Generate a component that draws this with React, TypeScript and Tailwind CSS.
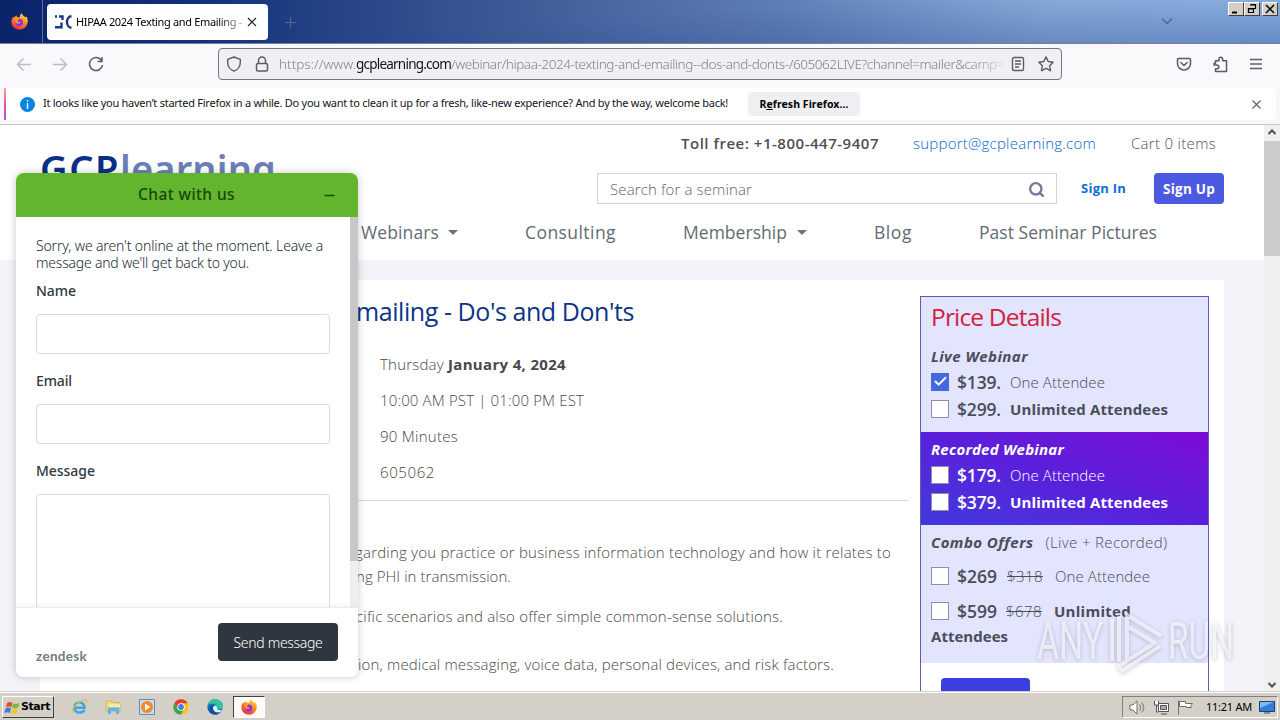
import { useLayoutEffect, useRef, useState } from 'react';
import type { ReactNode } from 'react';
import { Search, Check, Minus } from 'lucide-react';

// Inline text stretched to an exact width by spreading the letters.
function Fit({ w, className = '', children }: { w: number; className?: string; children: ReactNode }) {
  const ref = useRef<HTMLSpanElement>(null);
  const [spacing, setSpacing] = useState(0);

  useLayoutEffect(() => {
    const el = ref.current;
    if (!el) return;
    const n = (el.textContent ?? '').length;
    setSpacing((w - el.getBoundingClientRect().width) / n);
  }, [w]);

  return (
    <span ref={ref} className={`inline-block flex-none whitespace-pre ${className}`} style={{ letterSpacing: spacing }}>
      {children}
    </span>
  );
}

function FirefoxLogo({ size }: { size: number }) {
  return (
    <svg width={size} height={size} viewBox="0 0 16 16">
      <defs>
        <linearGradient id="ff-flame" x1="0.8" y1="0" x2="0.3" y2="1">
          <stop offset="0" stopColor="#ffe44a" />
          <stop offset="0.45" stopColor="#ff8a1f" />
          <stop offset="1" stopColor="#f5264f" />
        </linearGradient>
      </defs>
      <path d="M10 .3c.4 1.600 1.800 2.100 3 3.500 1.200-.1 1.400-.3 1.600-.6C15.600 5 16 6.800 15.700 9 15 13 11.900 15.700 8 15.700S.6 12.700.4 8.700C.3 6.500 1 4.500 2.200 3.200l.5 1.300L5 2l.6 1.800 2.500.4C8.200 2.600 9 1.100 10 .3z" fill="url(#ff-flame)" />
      <circle cx="7.800" cy="9" r="3.500" fill="#8a35d9" />
      <path d="M3.500 5.300c1.500-.9 3.400-.5 4.300.8-1.300.3-2 .9-1.600 1.700.5.8 2 .3 2.600 1.100-1 1.700-3.600 1.200-4.600-.5-.5-.9-.8-2-.7-3.100z" fill="#ff9722" />
    </svg>
  );
}

function WinButton({ children }: { children: ReactNode }) {
  return (
    <div className="flex h-[14px] w-4 items-center justify-center border border-t-white border-l-white border-r-[#404040] border-b-[#404040] bg-[#d4d0c8]">
      <svg width="12" height="12" viewBox="0 0 12 12" fill="none" stroke="#000" strokeWidth="1.5">
        {children}
      </svg>
    </div>
  );
}

function TabStrip() {
  return (
    <div className="flex h-[44px] border-b border-[#77809a] bg-[linear-gradient(176deg,transparent_45%,rgba(20,50,130,0.4)),linear-gradient(90deg,#0a246a_0%,#123078_15%,#3a5795_38%,#6080b8_62%,#8fb2de_82%,#9cc5f0_100%)]">
      <div className="flex w-[43px] items-center justify-center border-r border-[#5a6d9f] pr-1">
        <FirefoxLogo size={17} />
      </div>
      <div className="mt-1 ml-1 flex h-9 w-[221px] items-center rounded bg-white pl-2 font-['Noto_Sans',sans-serif] text-[11px] text-black">
        <svg width="17" height="14" viewBox="0 0 17 14" fill="none" stroke="#1b3a7c" strokeWidth="2.400">
          <path d="M0 1.500h2M4 1.500h3.500V5M0 12.300h6.500V7.500" />
          <path d="M16.500 1.300c-6 0-6 11.400 0 11.400" />
        </svg>
        <div className="mt-px ml-1 w-[166px] overflow-hidden [mask-image:linear-gradient(90deg,#000_85%,rgba(0,0,0,0.3))]">
          <Fit w={166}>HIPAA 2024 Texting and Emailing -</Fit>
        </div>
        <svg className="ml-[5px]" width="10" height="10" viewBox="0 0 10 10" stroke="#222" strokeWidth="1.200">
          <path d="M1 1l8 8M9 1L1 9" />
        </svg>
      </div>
      <svg className="mt-4 ml-4" width="13" height="13" viewBox="0 0 13 13" stroke="#52658c" strokeWidth="1.200">
        <path d="M6.500 1v11M1 6.500h11" />
      </svg>
      <svg className="mt-[17px] ml-auto" width="12" height="9" viewBox="0 0 12 9" fill="none" stroke="#4a6896" strokeWidth="1.500">
        <path d="M1 1.500l5 5 5-5" />
      </svg>
      <div className="mt-[2px] mr-[2px] ml-[55px] flex h-[14px]">
        <WinButton><path d="M2 9.500h5" strokeWidth="2" /></WinButton>
        <WinButton>
          <path d="M4.500 1.500h5v4h-2M4 2h6M2.500 5.500h5v4h-5zM2 6h6" strokeWidth="1.200" />
        </WinButton>
        <div className="w-[2px]" />
        <WinButton><path d="M2 2l8 8M10 2l-8 8" /></WinButton>
      </div>
    </div>
  );
}

function Toolbar() {
  return (
    <div className="flex h-11 items-center bg-[#f9f9fb] pb-1">
      <svg className="ml-4" width="80" height="18" viewBox="0 0 80 18" fill="none" stroke="#bcbcc4" strokeWidth="1.500">
        <path d="M15 9.500H1.500M7.500 3.500l-6 6 6 6" />
        <path d="M37 9.500h13.500M44.500 3.500l6 6-6 6" />
      </svg>
      <svg className="-ml-2" width="16" height="16" viewBox="0 0 16 16" fill="none" stroke="#5b5b66" strokeWidth="1.500">
        <path d="M13.400 4.300A6.500 6.500 0 1 0 14.500 9M14 1v4.500H9.500" />
      </svg>
      <div className="ml-[114px] flex h-8 w-[844px] items-center rounded border border-[#75757e] bg-[#f0f0f4] font-['Noto_Sans',sans-serif] text-[13.500px] font-light text-[#80808a]">
        <svg className="ml-[7px]" width="16" height="16" viewBox="0 0 16 16" fill="none" stroke="#5b5b66" strokeWidth="1.400">
          <path d="M8 1l6.300 2.300v3.200C14.300 10.500 11.500 14 8 15.200 4.500 14 1.700 10.500 1.700 6.500V3.300z" strokeLinejoin="round" />
        </svg>
        <svg className="ml-3" width="16" height="16" viewBox="0 0 16 16" fill="none" stroke="#5b5b66" strokeWidth="1.500">
          <rect x="2.500" y="7.500" width="11" height="7.500" rx="1.500" />
          <path d="M4.500 7V4.500a3.500 3.500 0 0 1 7 0V7" />
        </svg>
        <div className="ml-[9px] flex w-[725px] [mask-image:linear-gradient(90deg,#000_95%,rgba(0,0,0,0.25))]">
          <Fit w={77}>https://www.</Fit>
          <Fit w={95} className="font-normal text-[#15141a]">gcplearning.com</Fit>
          <Fit w={553}>/webinar/hipaa-2024-texting-and-emailing--dos-and-donts-/605062LIVE?channel=mailer&amp;camp=</Fit>
        </div>
        <svg className="ml-[6px]" width="16" height="16" viewBox="0 0 16 16" fill="none" stroke="#5b5b66" strokeWidth="1.400">
          <rect x="2.500" y="1.500" width="11" height="13" rx="1.500" />
          <path d="M5 5h6M5 8h6M5 11h4" />
        </svg>
        <svg className="ml-3" width="16" height="16" viewBox="0 0 16 16" fill="none" stroke="#5b5b66" strokeWidth="1.400" strokeLinejoin="round">
          <path d="M8 .9l2.200 4.600 5 .7-3.600 3.500.9 5L8 12.300l-4.500 2.400.9-5L.8 6.200l5-.7z" />
        </svg>
      </div>
      <svg className="ml-[114px]" width="16" height="16" viewBox="0 0 16 16" fill="none" stroke="#5b5b66" strokeWidth="1.500" strokeLinejoin="round">
        <path d="M2.500 2.500h11a1 1 0 0 1 1 1V7.500a6.500 6.500 0 0 1-13 0v-4a1 1 0 0 1 1-1z" />
        <path d="M4.800 6.500L8 9.500l3.200-3" strokeLinecap="round" />
      </svg>
      <svg className="ml-[21px]" width="16" height="17" viewBox="0 0 16 17" fill="none" stroke="#5b5b66" strokeWidth="1.500" strokeLinejoin="round">
        <path d="M2.500 7.200V4.800H6V3a1.800 1.800 0 0 1 3.600 0v1.800H13.500v10.700H2.500v-2.800H4a1.900 1.900 0 0 0 0-3.800H1V7.200z" />
      </svg>
      <svg className="ml-[21px]" width="12" height="12" viewBox="0 0 12 12" stroke="#5b5b66" strokeWidth="1.400">
        <path d="M0 1.500h12M0 6h12M0 10.500h12" />
      </svg>
    </div>
  );
}

function Notification() {
  return (
    <div className="flex h-[37px] border-b border-[#c4c4c8] bg-[#f7f7f8] pl-1">
      <div className="flex h-8 w-[1272px] items-center rounded-sm bg-white font-['Noto_Sans',sans-serif] text-[11px] text-[#15141a]">
        <div className="h-8 w-[2px] bg-linear-to-b from-[#f7a37c] via-[#ec4fa0] to-[#9b5bd6]" />
        <div className="ml-[14px] flex size-[15px] items-center justify-center rounded-full bg-[#0a84e6]">
          <svg width="3" height="9" viewBox="0 0 3 9" fill="#fff">
            <path d="M.8 0h1.400v1.500H.8zM.8 3h1.400v6H.8z" />
          </svg>
        </div>
        <Fit w={685} className="-mt-px ml-2">It looks like you haven’t started Firefox in a while. Do you want to clean it up for a fresh, like-new experience? And by the way, welcome back!</Fit>
        <div className="ml-5 flex h-6 w-28 items-center justify-center rounded bg-[#efeff1] pt-px text-[10.500px] font-bold text-black">
          <Fit w={89}>R<u>e</u>fresh Firefox...</Fit>
        </div>
        <svg className="mr-[15px] ml-auto" width="9" height="9" viewBox="0 0 9 9" stroke="#5b5b66" strokeWidth="1.100">
          <path d="M.5 .5l8 8M8.500 .5l-8 8" />
        </svg>
      </div>
    </div>
  );
}

function Caret({ className }: { className: string }) {
  return (
    <svg className={className} width="10" height="5" viewBox="0 0 10 5" fill="#6c757d">
      <path d="M0 0h10L5 5z" />
    </svg>
  );
}

function SiteHeader() {
  return (
    <div className="flex h-[135px] flex-col bg-white pt-2 text-[#4f4f4f]">
      <div className="flex h-5 items-center pl-[681px] text-[15px] leading-5">
        <Fit w={198} className="font-semibold">Toll free: +1-800-447-9407</Fit>
        <Fit w={183} className="ml-[34px] font-light text-[#0a66cc]">support@gcplearning.com</Fit>
        <Fit w={85} className="ml-[35px] font-light">Cart 0 items</Fit>
      </div>
      <div className="mt-5 flex h-[31px] items-center">
        <div className="h-[31px] w-[557px] pl-10">
          <div className="-mt-[29px] flex font-['Noto_Sans',sans-serif] text-[38px] leading-[48px]">
            <Fit w={80} className="font-semibold text-[#0b2f82]">GCP</Fit>
            <Fit w={156} className="font-semibold text-[#6c7fb8]">learning</Fit>
          </div>
        </div>
        <div className="ml-10 flex h-[31px] w-[460px] items-center justify-between border border-[#ced4da] pt-px pr-[11px] pl-3 text-[15px] font-light text-[#5c656d]">
          <Fit w={142}>Search for a seminar</Fit>
          <Search size={17} strokeWidth={3.4} color="#757b98" />
        </div>
        <Fit w={45} className="mt-px ml-6 text-[13px] font-bold text-[#0a6fd8]">Sign In</Fit>
        <div className="ml-7 flex h-[31px] w-[70px] items-center justify-center rounded bg-[#4b5ae0] pt-px text-[13.500px] font-bold text-white">
          <Fit w={52}>Sign Up</Fit>
        </div>
      </div>
      <div className="mt-[15px] flex h-[26px] items-center pl-[361px] text-[17.500px] font-medium text-[#626b73]">
        <Fit w={78}>Webinars</Fit>
        <Caret className="ml-[9px]" />
        <Fit w={91} className="ml-[67px]">Consulting</Fit>
        <Fit w={104} className="ml-[67px]">Membership</Fit>
        <Caret className="ml-[10px]" />
        <Fit w={38} className="ml-[67px]">Blog</Fit>
        <Fit w={178} className="ml-[67px]">Past Seminar Pictures</Fit>
      </div>
    </div>
  );
}

function Box({ checked = false }: { checked?: boolean }) {
  return checked ? (
    <span className="flex size-[18px] items-center justify-center bg-[#4468e0] text-white">
      <Check size={15} strokeWidth={3} />
    </span>
  ) : (
    <span className="size-[18px] border border-[#8d8fa8] bg-white" />
  );
}

function Offer({ price, bold = false, checked = false }: { price: string; bold?: boolean; checked?: boolean }) {
  return (
    <div className="flex h-[27px] items-center">
      <Box checked={checked} />
      <Fit w={44} className="ml-2 text-[17.500px] font-semibold">{price}</Fit>
      <Fit w={bold ? 158 : 95} className={bold ? 'ml-[9px] font-bold' : 'ml-[9px] font-light'}>
        {bold ? 'Unlimited Attendees' : 'One Attendee'}
      </Fit>
    </div>
  );
}

function PriceDetails() {
  return (
    <div className="mt-4 ml-[11px] w-[289px] border border-[#5c5cb8] text-[15px] leading-6 text-[#4a4d5a]">
      <div className="h-[135px] bg-[#e3e4fd] pt-[3px] pl-[10px]">
        <div className="h-[34px] text-[24.500px] leading-[34px] text-[#d3223f]"><Fit w={130}>Price Details</Fit></div>
        <div className="mt-[10px] h-6 font-bold italic"><Fit w={97}>Live Webinar</Fit></div>
        <Offer price="$139." checked />
        <Offer price="$299." bold />
      </div>
      <div className="h-[93px] bg-linear-to-tr from-[#4038dc] via-[#5a1fdb] to-[#7d06d4] pt-[5px] pl-[10px] text-white">
        <div className="h-6 font-bold italic"><Fit w={133}>Recorded Webinar</Fit></div>
        <Offer price="$179." />
        <Offer price="$379." bold />
      </div>
      <div className="h-[138px] bg-[#e3e4fd] pt-[5px] pl-[10px]">
        <div className="flex h-6">
          <Fit w={102} className="font-bold italic">Combo Offers</Fit>
          <Fit w={122} className="ml-3 font-light">(Live + Recorded)</Fit>
        </div>
        <div className="mt-[9px] flex h-[26px] items-center">
          <Box />
          <Fit w={40} className="ml-2 text-[17.500px] font-semibold">$269</Fit>
          <Fit w={36} className="ml-[10px] font-light line-through">$318</Fit>
          <Fit w={95} className="ml-3 font-light">One Attendee</Fit>
        </div>
        <div className="mt-[9px] flex h-[26px] items-center">
          <Box />
          <Fit w={40} className="ml-2 text-[17.500px] font-semibold">$599</Fit>
          <Fit w={36} className="ml-[9px] font-light line-through">$678</Fit>
          <Fit w={77} className="ml-3 font-bold">Unlimited</Fit>
        </div>
        <div className="h-6 font-bold"><Fit w={77}>Attendees</Fit></div>
      </div>
      <div className="mt-[15px] ml-5 h-9 w-[89px] rounded bg-[#3c3fe0]" />
    </div>
  );
}

// Copy that runs out from below the chat window, ending at a set right edge.
function Copy({ lead, text, w, className }: { lead: string; text: string; w: number; className: string }) {
  return (
    <div className={`flex h-6 justify-end whitespace-pre ${className}`}>
      <span>{lead}</span>
      <Fit w={w}>{text}</Fit>
    </div>
  );
}

function Seminar() {
  return (
    <div className="h-[412px] w-[869px] overflow-hidden text-[15px] leading-6 font-light text-[#484848]">
      <div className="mt-[13px] flex h-9 w-[594px] justify-end text-[25px] leading-9 font-normal whitespace-pre text-[#0b3487]">
        <Fit w={278}>mailing - Do's and Don'ts</Fit>
      </div>
      <div className="mt-[17px] flex flex-col pl-[340px]">
        <div className="flex h-9 items-center">
          <Fit w={68}>Thursday </Fit>
          <Fit w={118} className="font-bold">January 4, 2024</Fit>
        </div>
        <div className="flex h-9 items-center"><Fit w={204}>10:00 AM PST | 01:00 PM EST</Fit></div>
        <div className="flex h-9 items-center"><Fit w={78}>90 Minutes</Fit></div>
        <div className="flex h-9 items-center"><Fit w={55}>605062</Fit></div>
      </div>
      <div className="mt-[10px] h-px bg-[#d9d9dc]" />
      <Copy lead="re" text="garding you practice or business information technology and how it relates to" w={536} className="mt-[39px] w-[851px]" />
      <Copy lead="usi" text="ng PHI in transmission." w={155} className="w-[471px]" />
      <Copy lead="spe" text="cific scenarios and also offer simple common-sense solutions." w={427} className="mt-4 w-[743px]" />
      <Copy lead="encrypt" text="ion, medical messaging, voice data, personal devices, and risk factors." w={476} className="mt-6 w-[794px]" />
    </div>
  );
}

function PageScrollbar() {
  return (
    <div className="flex h-[567px] w-4 flex-col items-center bg-[#f0f0f0]">
      <svg className="mt-[4px]" width="8" height="6" viewBox="0 0 8 6" fill="none" stroke="#505050" strokeWidth="2">
        <path d="M.5 5L4 1.500 7.500 5" />
      </svg>
      <div className="mt-[6px] h-[115px] w-4 bg-[#cbcbcb]" />
      <svg className="mt-auto mb-[4px]" width="8" height="6" viewBox="0 0 8 6" fill="none" stroke="#505050" strokeWidth="2">
        <path d="M.5 1L4 4.500 7.500 1" />
      </svg>
    </div>
  );
}

function ChatWidget() {
  return (
    <div className="absolute top-[173px] left-4 flex h-[504px] w-[342px] flex-col overflow-hidden rounded-lg bg-white font-['Noto_Sans',sans-serif] text-[14px] text-[#2f3941] shadow-[0_0_8px_rgba(0,0,0,0.22)]">
      <div className="flex h-11 flex-none items-center bg-[#62b52d] pl-[122px] text-[#17470a]">
        <Fit w={97} className="text-[15.500px] font-medium">Chat with us</Fit>
        <Minus className="ml-[87px]" size={15} strokeWidth={2.5} />
      </div>
      <div className="flex min-h-0 flex-1">
        <div className="flex w-[334px] flex-col overflow-hidden px-5">
          <div className="mt-5 h-[35px] flex-none leading-[17px] font-light text-[#222b33]">
            <Fit w={287}>Sorry, we aren't online at the moment. Leave a</Fit>
            <Fit w={213}>message and we'll get back to you.</Fit>
          </div>
          <div className="mt-[9px] h-5 flex-none leading-5 font-medium"><Fit w={40}>Name</Fit></div>
          <div className="mt-[13px] h-10 flex-none rounded border border-[#d8dcde]" />
          <div className="mt-[17px] h-5 flex-none leading-5 font-medium"><Fit w={36}>Email</Fit></div>
          <div className="mt-[13px] h-10 flex-none rounded border border-[#d8dcde]" />
          <div className="mt-[17px] h-5 flex-none leading-5 font-medium"><Fit w={59}>Message</Fit></div>
          <div className="mt-[13px] h-32 flex-none rounded border border-[#d8dcde]" />
        </div>
        <div className="w-2 bg-[#efefef]"><div className="h-[344px] bg-[#c7c7c7]" /></div>
      </div>
      <div className="flex h-[70px] flex-none border-t border-[#ececec] bg-white shadow-[0_-2px_6px_rgba(0,0,0,0.05)]">
        <Fit w={51} className="mt-[38px] ml-5 font-['Lato',sans-serif] text-[13.500px] leading-5 font-bold text-[#737b80]">zendesk</Fit>
        <div className="mt-[15px] mr-5 ml-auto flex h-[38px] w-[120px] items-center justify-center rounded bg-[#2f3640] text-[14px] font-light text-white">
          <Fit w={89}>Send message</Fit>
        </div>
      </div>
    </div>
  );
}

function Watermark() {
  return (
    <svg className="absolute top-[604px] left-[1034px] [filter:drop-shadow(0_1px_2px_rgba(70,70,100,0.45))]" width="204" height="70" viewBox="0 0 204 70" fill="#fff" fillOpacity="0.65">
      <g fontFamily="Roboto, sans-serif" fontSize="52" fontWeight="400">
        <text x="3" y="55" textLength="66" lengthAdjust="spacingAndGlyphs">ANY</text>
        <text x="134" y="55" textLength="66" lengthAdjust="spacingAndGlyphs">RUN</text>
      </g>
      <g fill="none" stroke="#fff" strokeOpacity="0.65" strokeWidth="4" strokeLinejoin="round">
        <path d="M78 15v42M85 12v46" />
        <path d="M93 56V11l34 21M93 22l28 17-36 23 3 5 38-25" />
      </g>
    </svg>
  );
}

function Taskbar() {
  return (
    <div className="flex h-7 items-center border-t border-white bg-[#d4d0c8] pt-px pl-[2px] font-['DejaVu_Sans',sans-serif] text-[11px] text-black shadow-[0_-1px_0_#d4d0c8]">
      <div className="flex h-[22px] w-[52px] items-center border border-t-white border-l-white border-r-[#404040] border-b-[#404040] pt-px pl-[1px] font-bold">
        <svg width="17" height="16" viewBox="0 0 17 16">
          <path d="M3 3c2-1.500 4-1.200 5.500-.3L7.300 7.300C5.500 6.300 3.800 6.300 1.800 7.500z" fill="#e5532a" />
          <path d="M9.300 3.200c2 1 4 1 6.200-.4l-1.300 4.800c-2 1.200-4 1.100-6 .2z" fill="#7db63c" />
          <path d="M1.500 8.500c2-1.300 4-1.200 5.500-.3l-1.200 4.700C4 11.800 2.200 12 .3 13z" fill="#3f7fd0" />
          <path d="M8 8.700c2 1 4 1 6-.2l-1.300 4.700c-2 1.200-4 1.100-6 .2z" fill="#f5c431" />
        </svg>
        <Fit w={29} className="text-[11px]">Start</Fit>
      </div>
      <svg className="ml-[17px]" width="17" height="16" viewBox="0 0 17 16" fill="none">
        <path d="M13.500 11c-2.500 4-10 3.300-10-2.500 0-6.500 10-7 10 .3H4.500" stroke="#3da5e3" strokeWidth="2.500" />
        <path d="M1.500 13.500C-.5 10 8 1.500 14 1.200c2-.1 2 1.500 1 3" stroke="#e9bd3a" strokeWidth="1.300" />
      </svg>
      <svg className="ml-[17px]" width="17" height="16" viewBox="0 0 17 16">
        <path d="M1 2h6l1 1.500h7V12H1z" fill="#f2d878" stroke="#c9a849" strokeWidth=".7" />
        <path d="M4 5h11v3H4z" fill="#f8eab0" />
        <path d="M3 8.500h11v6.500h-3v-3H6v3H3z" fill="#62b4e2" />
      </svg>
      <svg className="ml-[17px]" width="16" height="16" viewBox="0 0 16 16">
        <path d="M.5 .5h15v15H.5z" fill="#c6dcf1" stroke="#5e8fc2" />
        <circle cx="8" cy="8" r="6" fill="#f58a1f" />
        <path d="M6 4.500v7L11.500 8z" fill="#fff" />
      </svg>
      <svg className="ml-[18px]" width="16" height="16" viewBox="0 0 16 16">
        <circle cx="8" cy="8" r="7.700" fill="#fbc116" />
        <path d="M1.300 4.200A7.700 7.700 0 0 1 14.700 4.200H8L5 9.800z" fill="#e33b2e" />
        <path d="M1.300 4.200A7.700 7.700 0 0 0 7.500 15.700l3.600-6-6 .5z" fill="#2da94f" />
        <circle cx="8" cy="8" r="3.800" fill="#fff" />
        <circle cx="8" cy="8" r="2.900" fill="#3e7ee8" />
      </svg>
      <svg className="ml-[18px]" width="17" height="16" viewBox="0 0 17 16">
        <circle cx="8" cy="8" r="7.700" fill="#1670c0" />
        <path d="M1 6C3-2 15-1.500 16 6.500c.3 3-2 4-4.500 4-2 0-2-1-1.500-2 1-3-5-5.500-9-2.500z" fill="#35c2a4" />
        <path d="M10 8.500c-.5 1.500 0 3 5 2.800-3 4-9.500 2-9-2.500C6.200 6 10 6 10 8.500z" fill="#e4f3fa" />
        <path d="M6 8.500c-.5 3.500 3.500 6.500 7 5.200C8 18 1 14 2 9.500c.5-2 2-3 4-3z" fill="#12509b" />
      </svg>
      <div className="ml-[9px] flex h-[22px] w-8 items-center justify-center border border-t-[#404040] border-l-[#404040] border-r-white border-b-white bg-[#fcfbfa]">
        <FirefoxLogo size={16} />
      </div>
      <div className="mr-[2px] ml-auto flex h-[22px] w-[156px] items-center border border-t-[#808080] border-l-[#808080] border-r-white border-b-white pl-[6px]">
        <svg width="17" height="15" viewBox="0 0 17 15" fill="#fff" stroke="#6e6e6e">
          <path d="M1 5h3l4-4v13l-4-4H1z" />
          <path d="M10.500 4.500c1.500 2 1.500 4 0 6M12.500 2.500c3 3 3 7 0 10" fill="none" />
        </svg>
        <svg className="ml-[7px]" width="17" height="15" viewBox="0 0 17 15" fill="#fff" stroke="#555">
          <path d="M5.500 3.500h10v8h-10zM8 14h6M1.500 1v4h4V1M3.500 5v7h2" />
          <path d="M7.500 5.500h6v4h-6z" fill="#aaa" />
        </svg>
        <svg className="ml-[7px]" width="17" height="15" viewBox="0 0 17 15" fill="#fff" stroke="#6e6e6e">
          <path d="M1.500 .5v14M2.500 1.500h6v2h7l-2 3 1 1h-5v-1h-7z" />
        </svg>
        <Fit w={46} className="ml-[12px] font-['Noto_Sans',sans-serif] text-[11px]">11:21 AM</Fit>
        <svg className="ml-[7px]" width="16" height="13" viewBox="0 0 16 13">
          <path d="M.5 .5h15v10H.5z" fill="#2f7fd8" stroke="#1d3f73" />
          <path d="M1 1h14L1 7z" fill="#7db9f2" />
          <path d="M5 12h6" stroke="#3a4d68" />
        </svg>
      </div>
    </div>
  );
}

export default function App() {
  return (
    <div className="relative flex h-[720px] w-[1280px] flex-col overflow-hidden bg-white font-['Open_Sans',sans-serif]">
      <TabStrip />
      <Toolbar />
      <Notification />
      <div className="flex h-[567px] overflow-hidden">
        <div className="flex w-[1264px] flex-col bg-[#f2f4f9]">
          <SiteHeader />
          <div className="mt-5 ml-10 flex h-[412px] w-[1184px] overflow-hidden bg-white">
            <Seminar />
            <PriceDetails />
          </div>
        </div>
        <PageScrollbar />
      </div>
      <Taskbar />
      <ChatWidget />
      <Watermark />
    </div>
  );
}
